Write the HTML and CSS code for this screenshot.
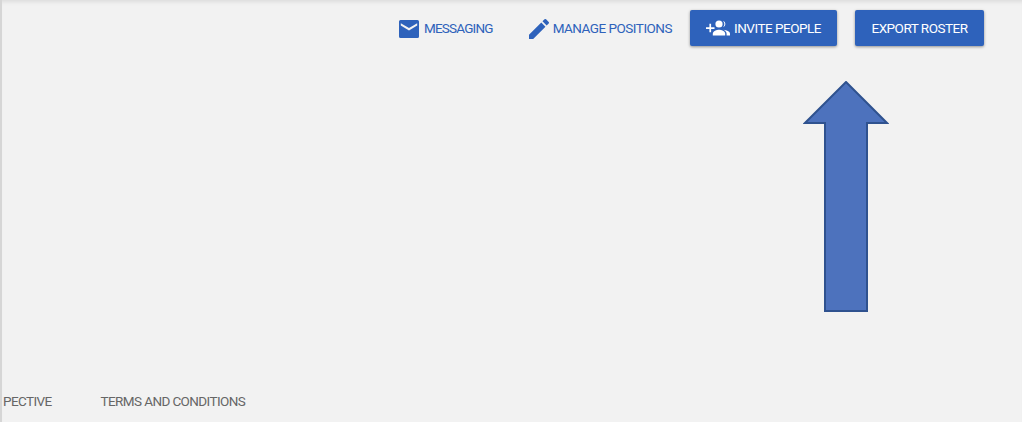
FILE: index.html
```html
<!DOCTYPE html>
<html lang="en">
<head>
<meta charset="utf-8">
<title>Roster</title>
<link rel="stylesheet" href="styles.css">
</head>
<body>
<div class="page">
  <header class="toolbar">
    <a class="link link-msg">
      <svg class="icon-msg" viewBox="0 0 20 18"><path d="M1.500 0h17A1.500 1.500 0 0 1 20 1.500v15a1.500 1.500 0 0 1-1.500 1.500h-17A1.500 1.500 0 0 1 0 16.500v-15A1.500 1.500 0 0 1 1.500 0zM1.800 3.200v2.300L10 10.400l8.200-4.900V3.200L10 8z" fill-rule="evenodd"/></svg>
      MESSAGING
    </a>
    <a class="link link-pos">
      <svg class="icon-pen" viewBox="3 3 18 18"><path d="M3 17.250V21h3.750L17.810 9.940l-3.750-3.750L3 17.250zM20.710 7.040a1 1 0 0 0 0-1.410l-2.340-2.340a1 1 0 0 0-1.410 0l-1.830 1.830 3.750 3.750 1.830-1.830z"/></svg>
      MANAGE POSITIONS
    </a>
    <button class="btn btn-invite">
      <svg class="icon-add" viewBox="0 0 25 16"><path d="M0 7.200h3.400V3.800h1.700v3.400h3.400v1.700H5.100v3.400H3.400V8.900H0z"/><circle cx="13" cy="4" r="3.600"/><path d="M6.800 15.500v-1.800c0-2.600 4-3.900 6.200-3.900s6.200 1.300 6.200 3.900v1.800z"/><path d="M17 .8a3.400 3.400 0 0 1 0 6.500 5 5 0 0 0 0-6.500zM17.500 9.800c2.800.3 6.500 1.500 6.500 3.900v1.800h-3.400v-1.800c0-1.700-1.300-3-3.100-3.900z"/></svg>
      INVITE PEOPLE
    </button>
    <button class="btn btn-export">EXPORT ROSTER</button>
  </header>
  <footer class="footer">
    <span class="foot-cut">PECTIVE</span>
    <span>TERMS AND CONDITIONS</span>
  </footer>
  <svg class="arrow" viewBox="0 0 86 232"><path d="M43 1 84 42H64V230H22V42H2z"/></svg>
</div>
</body>
</html>
```
FILE: styles.css
```css
* { box-sizing: border-box; }
html, body { margin: 0; height: 100%; }
body {
  background: #f2f2f2;
  font-family: Roboto, "Noto Sans", sans-serif;
  font-size: 13.5px;
  letter-spacing: -0.5px;
  overflow: hidden;
}
.page {
  position: relative;
  width: 1022px;
  height: 422px;
  display: flex;
  flex-direction: column;
  justify-content: space-between;
  border-left: 2px solid #d6d6d6;
  box-shadow: inset 0 5px 5px -4px #d4d4d4;
}
.toolbar {
  display: flex;
  align-items: center;
  padding: 10px 38px 0 0;
  justify-content: flex-end;
}
.link {
  display: flex;
  align-items: center;
  color: #2e62bb;
  fill: #2e62bb;
}
.link-msg { margin-right: 36px; gap: 5px; letter-spacing: -0.8px; }
.link-pos { margin-right: 18px; gap: 4px; }
.icon-msg { width: 20px; height: 18px; margin-top: 2px; }
.icon-pen { width: 20px; height: 20px; margin-top: 2px; }
.btn {
  height: 36px;
  border: 0;
  border-radius: 2px;
  background: #2e62bb;
  color: #fff;
  fill: #fff;
  font: inherit;
  letter-spacing: inherit;
  display: flex;
  align-items: center;
  justify-content: center;
  box-shadow: 0 1px 3px rgba(0, 0, 0, 0.4);
}
.btn-invite { width: 147px; margin-right: 18px; gap: 3px; }
.btn-export { width: 129px; }
.icon-add { width: 25px; height: 16px; }
.footer {
  display: flex;
  gap: 49px;
  padding: 0 0 13px 1px;
  color: #666;
  letter-spacing: -0.6px;
}
.arrow {
  position: absolute;
  left: 801px;
  top: 81px;
  width: 86px;
  height: 232px;
  fill: #4d72bd;
  stroke: #2f528f;
  stroke-width: 2;
}
```
